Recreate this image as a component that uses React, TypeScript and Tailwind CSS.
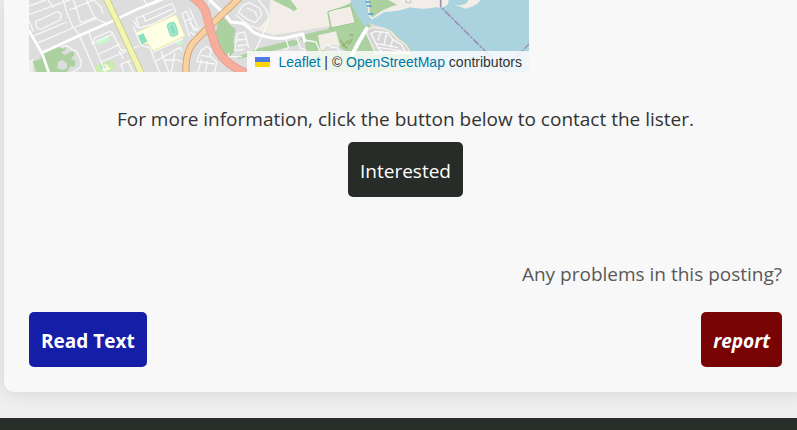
const streets = "stroke-[#f8f8f8] fill-none";

/** Street map. Each group covers one 180px wide part, at three units per pixel. */
function MapTiles() {
  return (
    <svg
      className="block h-[72px] w-full"
      viewBox="0 0 1500 216"
      preserveAspectRatio="xMinYMin slice"
      role="img"
      aria-label="Map of the listing's neighbourhood"
      strokeLinejoin="round"
      strokeLinecap="round"
    >
      <rect width="1500" height="216" fill="#dddddd" />

      {/* Open land, parks and water in the middle */}
      <g transform="translate(483 0)">
        <path d="M128 0H640V216H330L150 190L128 90Z" fill="#dddddd" />
        <path d="M240 0H500L480 60L410 80L250 105L200 90L238 50Z" fill="#f2eee7" />
        <path d="M84 70L100 52L122 76L137 88L130 125L137 150L118 172L108 185Q84 150 74 112Z" fill="#acd1a0" />
        <path d="M248 0L300 26L312 34L322 26L302 0Z" fill="#acd1a0" />
        <path d="M330 118L346 102L412 88L420 80L412 38L480 10L486 0H510L530 216H360L345 130Z" fill="#acd1a0" />
        <path d="M436 28L482 18L496 68L424 84L414 36Z" fill="#f2eee7" stroke="#99c78d" strokeWidth="3" />
        <path d="M384 106L438 94L450 140L392 152Z" fill="#f2eee7" />
        <path d="M205 145L310 120L330 124L320 136L182 168L150 176L140 172Z" fill="#acd1a0" />
        <path d="M400 136H440L470 156H405Z" fill="#dddddd" />
        <path d="M452 120l10 16l12-14M458 136l14 8M480 104l10 2M486 118l-10 14" stroke="#94ad68" strokeWidth="4" fill="none" />
      </g>

      <g transform="translate(993 0)">
        <path d="M-28 0H507V216H150L135 130L90 88L28 70L14 84L-22 20Z" fill="#aad3df" />
        <path d="M20 0L26 48L36 58Q62 44 72 36Q120 34 150 22Q190 30 228 22Q252 26 264 12L266 0Z" fill="#f2eee7" />
        <path d="M26 0L30 46L38 52Q66 26 112 14L86 0Z" fill="#acd1a0" />
        <path d="M138 0V8H152V0" stroke="#c9c0bb" strokeWidth="3" fill="none" />
        <path d="M284 14Q318 20 326 0H362Q350 18 318 26Z" fill="#f2eee7" />
        <path d="M0 60L16 80L28 70L34 82Q70 84 92 90Q110 110 134 126Q150 140 155 160V216H-20Z" fill="#acd1a0" />
        <path d="M16 88L38 82Q76 84 94 96Q108 116 130 128Q148 142 150 160H46L24 110Z" fill="#d6d6d6" stroke="#f2eee7" strokeWidth="4" />
        <path d="M32 100L46 94L84 98L98 118L124 134L138 160M32 100L54 142L66 158M48 130L112 142M62 96L54 120M80 98L72 136M98 118L92 140M54 142L122 152" className={streets} strokeWidth="4" />
        <path d="M242 0V20L390 168L440 216" stroke="#9a8fb0" strokeWidth="5" strokeDasharray="20 8 4 8" fill="none" />
        <path d="M507 132L470 170L440 200" stroke="#9a8fb0" strokeWidth="4" strokeDasharray="18 8 4 8" fill="none" />
        <path d="M18 6H30M22 18H34M26 42H38" stroke="#4d9cdf" strokeWidth="4" />
      </g>

      {/* Residential blocks on the left */}
      <g transform="translate(-27 0)">
        <path d="M27 180L44 176L38 216H27Z" fill="#f2eee7" />
        <path d="M38 184L62 176L64 160L116 142L132 146L136 138L138 148L124 158L134 166L158 152L164 164L152 176L166 182L164 200L152 198L148 206L140 216H48Z" fill="#acd1a0" />
        <path d="M114 186L126 180L140 188L142 204L126 210L112 204Z" fill="#dddddd" />
        <path d="M228 122L262 106L270 120L236 136Z" fill="#c8facc" />
        <path d="M228 196L278 178L288 204L264 216H228Z" fill="#cdebb0" />
        <path d="M236 202L258 192L272 206L254 216Z" fill="#f7fbd6" />
        <path d="M240 200l10-5l6 7l-10 5zM262 190l8-4" fill="#aae0cb" stroke="#aae0cb" strokeWidth="3" />
        <path d="M296 130L308 124L318 144L306 154Z" fill="#e8dfda" />
        <path d="M348 98L468 44L494 108L400 152L384 130L364 132Z" fill="#ffffe5" stroke="#f3efac" strokeWidth="3" />
        <path d="M352 108L370 100L382 124L364 134Z" fill="#88e0be" />
        <rect x="444" y="66" width="28" height="44" rx="12" transform="rotate(-18 458 88)" fill="#88e0be" />
        <rect x="450" y="72" width="16" height="32" rx="7" transform="rotate(-18 458 88)" fill="none" stroke="#b9efd9" strokeWidth="3" />
        <path d="M462 124L484 116L488 130L472 136Z" fill="#c8facc" />

        <path
          d="M27 18L76 0M27 44L136 4L150 0M48 64L110 36Q122 36 124 48L120 60L62 88Q50 86 48 76ZM44 106L140 66M56 128L158 84L228 56M130 0L140 36L158 80L178 104M148 30L210 4L222 0M160 0L168 22L182 68L228 52M200 0L224 54L258 70M222 0L244 22L248 40M84 0L100 22M27 62L40 94"
          className={streets}
          strokeWidth="4"
        />
        <path
          d="M126 140L142 138Q154 150 170 154L184 184L182 200Q174 208 158 216M178 104L186 124L226 216M206 96L240 176L256 216M216 130L226 112L270 94L278 100L304 152L330 146M278 102L216 132M236 162L298 134M246 184L356 138M298 154L310 176M300 194L324 184L340 216M304 192L310 216M322 188L334 180"
          className={streets}
          strokeWidth="4"
        />
        <path
          d="M348 54L358 84L400 72L468 36L456 10L352 54M342 64L352 82M370 46L376 64L456 28M384 20L372 0M396 14L430 0M486 40L500 34L522 92L540 84M486 40L508 108M498 62L516 56M510 28L532 80M340 80L364 136L390 144L418 216M400 156L488 116M410 182L480 142L486 152M424 156L446 216M436 180L474 180L496 190M464 160L454 216"
          className={streets}
          strokeWidth="4"
        />
        <path d="M27 92L66 160L86 216" stroke="#ffffff" strokeWidth="8" fill="none" />
        <path d="M66 158L180 106L280 62L356 26L410 4L420 0" stroke="#ffffff" strokeWidth="8" fill="none" />
        <path d="M258 -6L290 60L326 138L364 220" stroke="#c9cc8c" strokeWidth="20" fill="none" />
        <path d="M258 -6L290 60L326 138L364 220" stroke="#f1f5b0" strokeWidth="15" fill="none" />
      </g>

      {/* Streets and main roads around the junction */}
      <g transform="translate(483 0)">
        <path
          d="M158 16L178 8L208 24L216 44L196 68L172 58L146 38ZM172 24L196 36L200 50M206 0L232 34L236 54L218 106L196 150M138 46L180 78L202 84M142 100L164 96L176 142M142 100L134 152M138 120L168 118M144 138L172 134M134 152L162 148M288 118L296 144L282 150M318 110L332 144L346 150M344 120L378 126L390 154M400 140L414 134L424 142L440 142L450 156"
          className={streets}
          strokeWidth="4"
        />
        <path
          d="M20 184L34 150L50 140L64 150L60 168L80 186L74 216M20 184L72 192M34 166L58 170M34 180L24 216M52 184L46 216M0 70L24 92M0 96L16 106M62 0L56 12"
          className={streets}
          strokeWidth="4"
        />
        <path d="M60 0L84 24Q108 42 122 66L158 70Q176 82 192 98Q240 120 286 114L338 102L344 124" stroke="#ffffff" strokeWidth="9" fill="none" />
        <path d="M530 86L504 130L486 166" stroke="#ffffff" strokeWidth="12" fill="none" />
        <path d="M116 160L114 188M120 170L154 170" className={streets} strokeWidth="4" />
        <path d="M148 -6L60 78L20 118Q-16 150 -12 220" stroke="#c9a070" strokeWidth="21" fill="none" />
        <path d="M148 -6L60 78L20 118Q-16 150 -12 220" stroke="#fad0a0" strokeWidth="16" fill="none" />
        <path d="M-10 -20Q44 10 50 46Q60 90 76 136Q96 186 160 216" stroke="#e39a8c" strokeWidth="26" fill="none" />
        <path d="M-10 -20Q44 10 50 46Q60 90 76 136Q96 186 160 216" stroke="#f7ad9b" strokeWidth="22" fill="none" />
      </g>
    </svg>
  );
}

function ListingMap() {
  return (
    <div className="relative w-full max-w-[500px] overflow-hidden">
      <MapTiles />
      <p className="absolute right-0 bottom-0 flex h-[21px] items-center bg-white/80 pr-[7px] pl-2 font-['Liberation_Sans',Arial,sans-serif] text-[14px] leading-5 whitespace-pre text-[#333333]">
        <a href="#leaflet" className="flex items-center gap-2 text-[#0078a8]">
          <svg className="h-[10px] w-[15px]" viewBox="0 0 15 10" aria-hidden="true">
            <path fill="#4c7be1" d="M0 0h15v5H0z" />
            <path fill="#ffd500" d="M0 5h15v5H0z" />
          </svg>
          Leaflet
        </a>
        {" | © "}
        <a href="#openstreetmap" className="text-[#0078a8]">OpenStreetMap</a>
        {" contributors"}
      </p>
    </div>
  );
}

const buttonBase = "h-[55px] cursor-pointer rounded-[5px] px-3 pt-[2px] text-white";

export default function App() {
  return (
    <div className="overflow-hidden bg-[#efefef] font-['Open_Sans','Noto_Sans',sans-serif] text-[19px] leading-[30px] text-[#333333]">
      <main className="-mr-[10px] ml-1 rounded-b-[10px] bg-[#f8f8f8] px-[25px] pb-[25px] shadow-[0_0_20px_rgba(0,0,0,0.12)]">
        <ListingMap />
        <section className="flex flex-col items-center gap-2 pt-8">
          <p>For more information, click the button below to contact the lister.</p>
          <button type="button" className={`${buttonBase} bg-[#272c28]`}>Interested</button>
        </section>
        <p className="pt-[62px] text-right text-[#595959]">Any problems in this posting?</p>
        <div className="flex justify-between pt-[23px]">
          <button type="button" className={`${buttonBase} bg-[#151ea6] font-bold`}>Read Text</button>
          <button type="button" className={`${buttonBase} bg-[#780404] font-bold italic`}>report</button>
        </div>
      </main>
      <footer className="mt-[26px] h-3 bg-[#272d29]" />
    </div>
  );
}
